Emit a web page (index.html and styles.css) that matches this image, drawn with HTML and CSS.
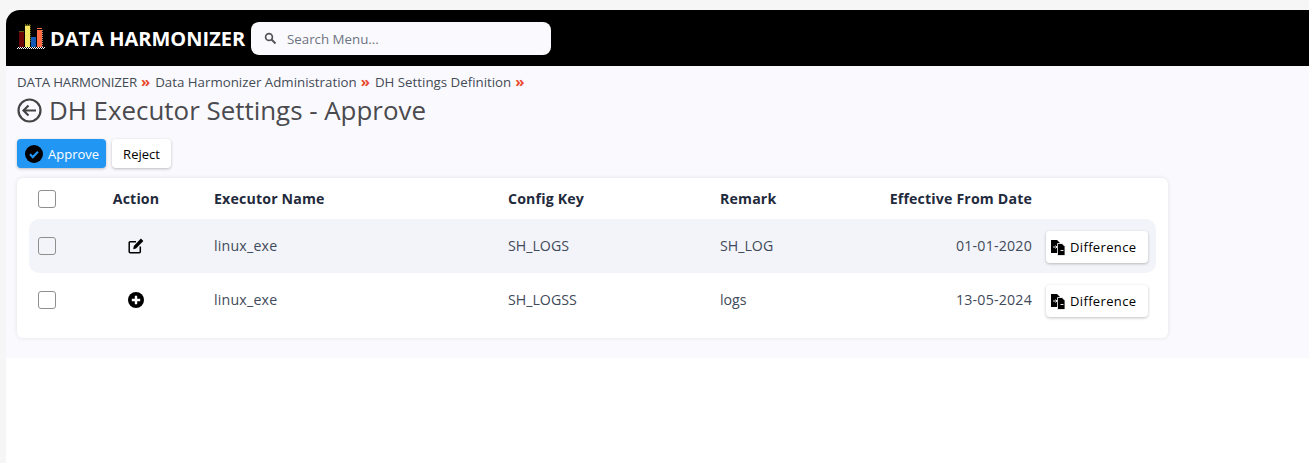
FILE: index.html
```html
<!DOCTYPE html>
<html lang="en">
<head>
<meta charset="utf-8">
<title>DH Executor Settings - Approve</title>
<link rel="stylesheet" href="styles.css">
</head>
<body>
<div class="app">
  <header class="topbar">
    <svg class="logo" width="30" height="28" viewBox="0 0 30 28">
      <rect x="3" y="8" width="5" height="15" fill="#6b0404"/>
      <path d="M3 7.500h5" stroke="#5a5a10" stroke-width="1"/>
      <rect x="9" y="2" width="5" height="21" fill="#f5e663"/>
      <path d="M9 .5h6M14.500 1v17" stroke="#6a6a14" stroke-width="1" stroke-dasharray="1 1"/>
      <path d="M9 1.500h5" stroke="#6a6a14" stroke-width="1"/>
      <rect x="15" y="13" width="5" height="10" fill="#1259b5"/>
      <rect x="21" y="6" width="5" height="17" fill="#ff6b43"/>
      <path d="M21 4.500h5" stroke="#ff6b43" stroke-width="1"/>
      <path d="M26.500 6v17" stroke="#b98a70" stroke-width="1" stroke-dasharray="1 1"/>
      <path d="M2 23.500h27M1 24.500h27" stroke="#fff" stroke-width="1" stroke-dasharray="1 1"/>
    </svg>
    <span class="brand">DATA HARMONIZER</span>
    <div class="search">
      <svg class="search-icon" width="13" height="13" viewBox="0 0 13 13"><circle cx="5" cy="5" r="3.400" fill="none" stroke="#555" stroke-width="1.700"/><path d="M7.500 7.500 11.500 11.500" stroke="#555" stroke-width="2"/></svg>
      <span class="search-text">Search Menu...</span>
    </div>
  </header>
  <main class="content">
    <nav class="crumbs">
      <span class="crumb-root">DATA HARMONIZER</span><span class="sep">»</span>
      <span>Data Harmonizer Administration</span><span class="sep">»</span>
      <span>DH Settings Definition</span><span class="sep">»</span>
    </nav>
    <div class="title-row">
      <svg class="back" width="25" height="25" viewBox="0 0 25 25"><circle cx="12.500" cy="12.500" r="11" fill="none" stroke="#444" stroke-width="2.200"/><path d="M19 12.500H7M11.500 7.500l-5 5 5 5" fill="none" stroke="#444" stroke-width="2.200"/></svg>
      <h1>DH Executor Settings - Approve</h1>
    </div>
    <div class="actions">
      <button class="btn btn-primary">
        <svg width="18" height="18" viewBox="0 0 18 18"><circle cx="9" cy="9" r="9" fill="#000"/><path d="M5 9.300l2.800 2.800L13 6.800" fill="none" stroke="#2196f3" stroke-width="2.200"/></svg>
        Approve
      </button>
      <button class="btn btn-plain">Reject</button>
    </div>
    <section class="card">
      <div class="row head">
        <span class="check"></span>
        <span class="center">Action</span>
        <span>Executor Name</span>
        <span>Config Key</span>
        <span>Remark</span>
        <span class="right">Effective From Date</span>
      </div>
      <div class="row body shaded">
        <span class="check"></span>
        <span class="center">
          <svg width="16" height="16" viewBox="0 0 16 16"><path d="M8 3.700H2.200A1 1 0 0 0 1.200 4.700v9.100a1 1 0 0 0 1 1h9.100a1 1 0 0 0 1-1V8.500" fill="none" stroke="#000" stroke-width="1.500"/><path d="M5.200 11.200l.6-3.100L12.900.6l2.500 2.500L8 10.600z" fill="#000"/></svg>
        </span>
        <span class="txt spaced">linux_exe</span>
        <span class="txt">SH_LOGS</span>
        <span class="txt">SH_LOG</span>
        <span class="txt right spaced">01-01-2020</span>
        <button class="btn btn-diff">
          <svg width="16" height="17" viewBox="0 0 16 17"><path d="M1 1h6l3 3v10H1z" fill="#000"/><path d="M7.500 4.500H12l3 3v9H7.500z" fill="#000" stroke="#fff" stroke-width=".8"/><path d="M3 8h4M5.500 6.500 7 8 5.500 9.500M10.500 11.500h3" stroke="#fff" stroke-width=".9" fill="none"/></svg>
          Difference
        </button>
      </div>
      <div class="row body">
        <span class="check"></span>
        <span class="center">
          <svg width="16" height="16" viewBox="0 0 16 16"><circle cx="8" cy="8" r="8" fill="#000"/><path d="M8 3.800v8.400M3.800 8h8.400" stroke="#fff" stroke-width="2.400"/></svg>
        </span>
        <span class="txt spaced">linux_exe</span>
        <span class="txt">SH_LOGSS</span>
        <span class="txt">logs</span>
        <span class="txt right spaced">13-05-2024</span>
        <button class="btn btn-diff">
          <svg width="16" height="17" viewBox="0 0 16 17"><path d="M1 1h6l3 3v10H1z" fill="#000"/><path d="M7.500 4.500H12l3 3v9H7.500z" fill="#000" stroke="#fff" stroke-width=".8"/><path d="M3 8h4M5.500 6.500 7 8 5.500 9.500M10.500 11.500h3" stroke="#fff" stroke-width=".9" fill="none"/></svg>
          Difference
        </button>
      </div>
    </section>
  </main>
</div>
</body>
</html>
```
FILE: styles.css
```css
* { box-sizing: border-box; }
html, body { height: 100%; }
body {
  margin: 0;
  background: #f6f6f6;
  padding: 10px 0 0 6px;
  font-family: "Open Sans", sans-serif;
  overflow: hidden;
}
.app { background: #fff; height: 100%; border-top-left-radius: 14px; overflow: hidden; }
.topbar {
  height: 56px;
  background: #000;
  display: flex;
  align-items: center;
  padding-left: 10px;
}
.logo { flex: none; margin-right: 4px; }
.brand { color: #fff; font-weight: 700; font-size: 20px; white-space: nowrap; width: 201px; }
.search {
  width: 300px;
  height: 33px;
  background: #fafafe;
  border-radius: 8px;
  display: flex;
  align-items: center;
  padding-left: 13px;
  gap: 10px;
}
.search-text { color: #6e7380; font-size: 13.300px; position: relative; top: 1px; }
.content { background: #fafafe; height: 292px; padding: 7px 11px 0; }
.crumbs { font-size: 13.300px; color: #444b55; line-height: 18px; display: flex; white-space: pre; }
.crumb-root { letter-spacing: -.2px; }
.sep { color: #e8492d; font-weight: 700; font-size: 15px; line-height: 16px; margin: 0 5px 0 4px; }
.title-row { display: flex; align-items: center; gap: 7px; height: 38px; }
.title-row h1 { margin: 0; font-size: 25.900px; font-weight: 400; color: #4a4a4f; white-space: nowrap; }
.back { flex: none; }
.actions { display: flex; gap: 6px; margin-top: 10px; }
.btn {
  border: 0;
  border-radius: 4px;
  font-family: inherit;
  font-size: 13px;
  display: inline-flex;
  align-items: center;
  cursor: pointer;
  box-shadow: 0 1px 3px rgba(0,0,0,.25);
  padding: 0;
}
.btn-primary { background: #2196f3; color: #fff; width: 89px; height: 29px; padding-left: 8px; gap: 5px; }
.btn-plain { background: #fff; color: #000; width: 59px; height: 29px; justify-content: center; }
.card {
  margin-top: 10px;
  width: 1151px;
  height: 160px;
  background: #fff;
  border-radius: 6px;
  box-shadow: 0 0 4px rgba(0,0,0,.1);
  padding: 0 12px;
}
.row {
  display: grid;
  grid-template-columns: 50px 135px 294px 212px 156px 170px 102px;
  align-items: center;
  font-size: 14.200px;
  color: #3f4a5a;
}
.row > :first-child { margin-left: 9px; }
.head { height: 41px; font-weight: 700; color: #1f2a3c; letter-spacing: .15px; white-space: nowrap; }
.body { height: 54px; }
.shaded { background: #f3f4f9; border-radius: 10px; }
.txt { padding-bottom: 2px; }
.spaced { letter-spacing: .2px; }
.check {
  display: block;
  width: 18px;
  height: 18px;
  border: 1px solid #8f8f8f;
  border-radius: 3px;
  background: #fff;
}
.shaded .check { background: #f3f4f9; }
.center { display: flex; justify-content: center; padding-right: 21px; }
.right { text-align: right; padding-right: 14px; }
.btn-diff {
  background: #fff;
  color: #000;
  width: 102px;
  height: 32px;
  margin-top: 2px;
  padding-left: 4px;
  gap: 4px;
  letter-spacing: .35px;
}
```
